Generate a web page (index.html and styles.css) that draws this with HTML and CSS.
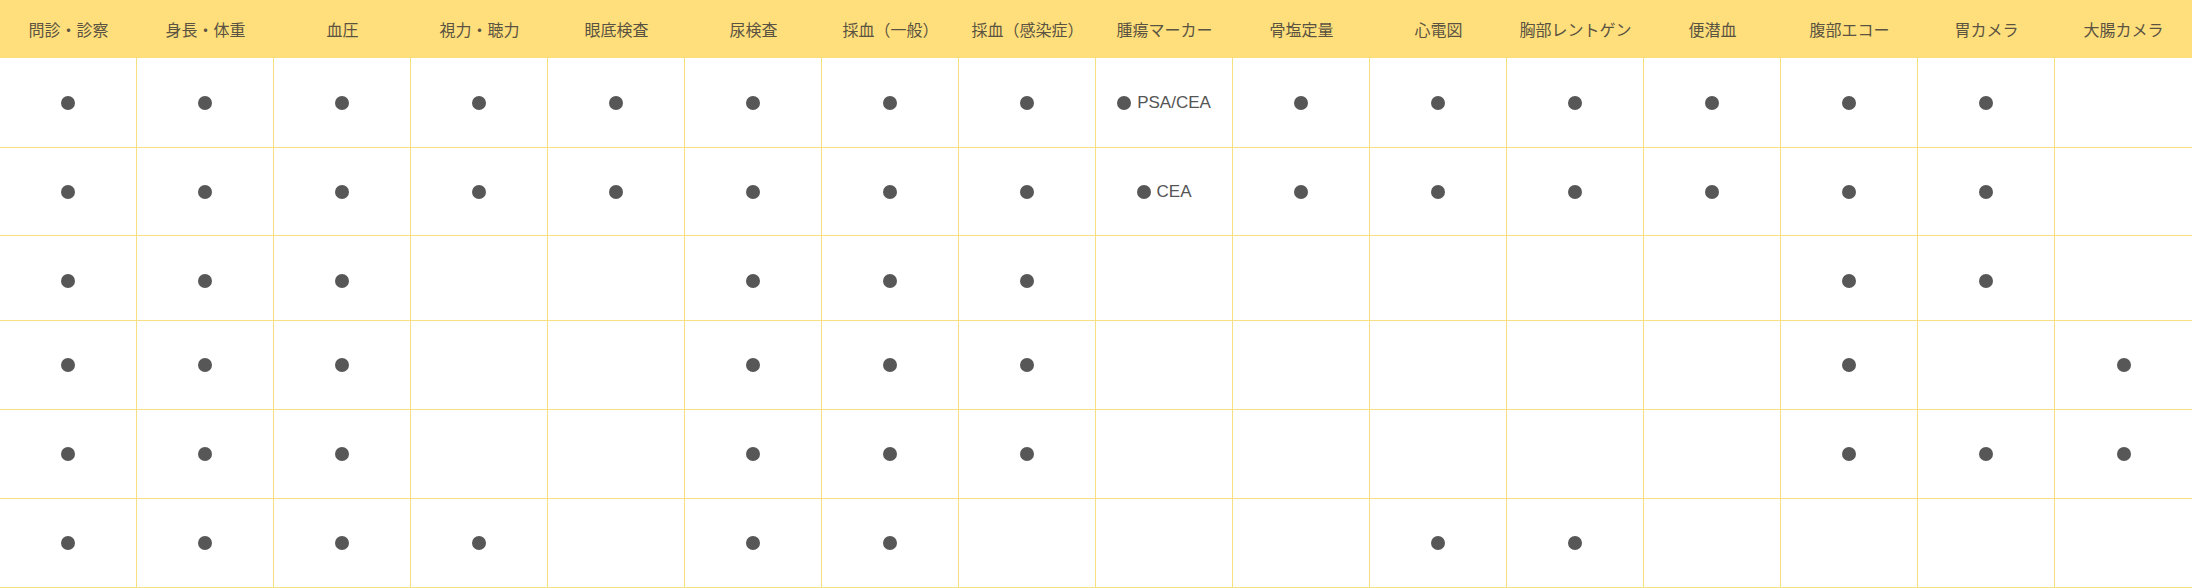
FILE: index.html
```html
<!DOCTYPE html>
<html lang="ja">
<head>
<meta charset="utf-8">
<title>検査項目</title>
<link rel="stylesheet" href="styles.css">
</head>
<body>
<div class="table">
  <div class="head">
    <div class="th">問診・診察</div>
    <div class="th">身長・体重</div>
    <div class="th">血圧</div>
    <div class="th">視力・聴力</div>
    <div class="th">眼底検査</div>
    <div class="th">尿検査</div>
    <div class="th">採血（一般）</div>
    <div class="th">採血（感染症）</div>
    <div class="th">腫瘍マーカー</div>
    <div class="th">骨塩定量</div>
    <div class="th">心電図</div>
    <div class="th">胸部レントゲン</div>
    <div class="th">便潜血</div>
    <div class="th">腹部エコー</div>
    <div class="th">胃カメラ</div>
    <div class="th">大腸カメラ</div>
  </div>
  <div class="row r1">
    <div class="td"><span class="dot"></span></div>
    <div class="td"><span class="dot"></span></div>
    <div class="td"><span class="dot"></span></div>
    <div class="td"><span class="dot"></span></div>
    <div class="td"><span class="dot"></span></div>
    <div class="td"><span class="dot"></span></div>
    <div class="td"><span class="dot"></span></div>
    <div class="td"><span class="dot"></span></div>
    <div class="td"><span class="dot"></span><span class="note">PSA/CEA</span></div>
    <div class="td"><span class="dot"></span></div>
    <div class="td"><span class="dot"></span></div>
    <div class="td"><span class="dot"></span></div>
    <div class="td"><span class="dot"></span></div>
    <div class="td"><span class="dot"></span></div>
    <div class="td"><span class="dot"></span></div>
    <div class="td"></div>
  </div>
  <div class="row r2">
    <div class="td"><span class="dot"></span></div>
    <div class="td"><span class="dot"></span></div>
    <div class="td"><span class="dot"></span></div>
    <div class="td"><span class="dot"></span></div>
    <div class="td"><span class="dot"></span></div>
    <div class="td"><span class="dot"></span></div>
    <div class="td"><span class="dot"></span></div>
    <div class="td"><span class="dot"></span></div>
    <div class="td"><span class="dot"></span><span class="note">CEA</span></div>
    <div class="td"><span class="dot"></span></div>
    <div class="td"><span class="dot"></span></div>
    <div class="td"><span class="dot"></span></div>
    <div class="td"><span class="dot"></span></div>
    <div class="td"><span class="dot"></span></div>
    <div class="td"><span class="dot"></span></div>
    <div class="td"></div>
  </div>
  <div class="row r3">
    <div class="td"><span class="dot"></span></div>
    <div class="td"><span class="dot"></span></div>
    <div class="td"><span class="dot"></span></div>
    <div class="td"></div>
    <div class="td"></div>
    <div class="td"><span class="dot"></span></div>
    <div class="td"><span class="dot"></span></div>
    <div class="td"><span class="dot"></span></div>
    <div class="td"></div>
    <div class="td"></div>
    <div class="td"></div>
    <div class="td"></div>
    <div class="td"></div>
    <div class="td"><span class="dot"></span></div>
    <div class="td"><span class="dot"></span></div>
    <div class="td"></div>
  </div>
  <div class="row r4">
    <div class="td"><span class="dot"></span></div>
    <div class="td"><span class="dot"></span></div>
    <div class="td"><span class="dot"></span></div>
    <div class="td"></div>
    <div class="td"></div>
    <div class="td"><span class="dot"></span></div>
    <div class="td"><span class="dot"></span></div>
    <div class="td"><span class="dot"></span></div>
    <div class="td"></div>
    <div class="td"></div>
    <div class="td"></div>
    <div class="td"></div>
    <div class="td"></div>
    <div class="td"><span class="dot"></span></div>
    <div class="td"></div>
    <div class="td"><span class="dot"></span></div>
  </div>
  <div class="row r5">
    <div class="td"><span class="dot"></span></div>
    <div class="td"><span class="dot"></span></div>
    <div class="td"><span class="dot"></span></div>
    <div class="td"></div>
    <div class="td"></div>
    <div class="td"><span class="dot"></span></div>
    <div class="td"><span class="dot"></span></div>
    <div class="td"><span class="dot"></span></div>
    <div class="td"></div>
    <div class="td"></div>
    <div class="td"></div>
    <div class="td"></div>
    <div class="td"></div>
    <div class="td"><span class="dot"></span></div>
    <div class="td"><span class="dot"></span></div>
    <div class="td"><span class="dot"></span></div>
  </div>
  <div class="row r6">
    <div class="td"><span class="dot"></span></div>
    <div class="td"><span class="dot"></span></div>
    <div class="td"><span class="dot"></span></div>
    <div class="td"><span class="dot"></span></div>
    <div class="td"></div>
    <div class="td"><span class="dot"></span></div>
    <div class="td"><span class="dot"></span></div>
    <div class="td"></div>
    <div class="td"></div>
    <div class="td"></div>
    <div class="td"><span class="dot"></span></div>
    <div class="td"><span class="dot"></span></div>
    <div class="td"></div>
    <div class="td"></div>
    <div class="td"></div>
    <div class="td"></div>
  </div>
</div>
</body>
</html>
```

FILE: styles.css
```css
html, body {
  margin: 0;
  padding: 0;
  background: #ffffff;
}

body {
  font-family: "Noto Sans CJK JP", "Noto Sans", sans-serif;
  color: #555555;
}

.table {
  width: 2192px;
}

.head,
.row {
  display: grid;
  grid-template-columns: repeat(16, 1fr);
}

.head {
  height: 58px;
  background: #ffdf7b;
}

.th {
  display: flex;
  align-items: center;
  justify-content: center;
  font-size: 16px;
  color: #5b5342;
  white-space: nowrap;
}

.r1 { height: 90px; }
.r2 { height: 88px; }
.r3 { height: 85px; }
.r4 { height: 89px; }
.r5 { height: 89px; }
.r6 { height: 89px; }

.td {
  box-sizing: border-box;
  display: flex;
  align-items: center;
  justify-content: center;
  gap: 6px;
  border-right: 1px solid #f6df80;
  border-bottom: 1px solid #f6df80;
}

.r3 .td {
  padding-top: 6px;
}

.td:last-child {
  border-right: none;
}

.dot {
  display: inline-block;
  width: 14px;
  height: 14px;
  border-radius: 50%;
  background: #575757;
}

.note {
  font-family: "Liberation Sans", Arial, sans-serif;
  font-size: 17px;
  color: #555555;
  line-height: 1;
}
```
